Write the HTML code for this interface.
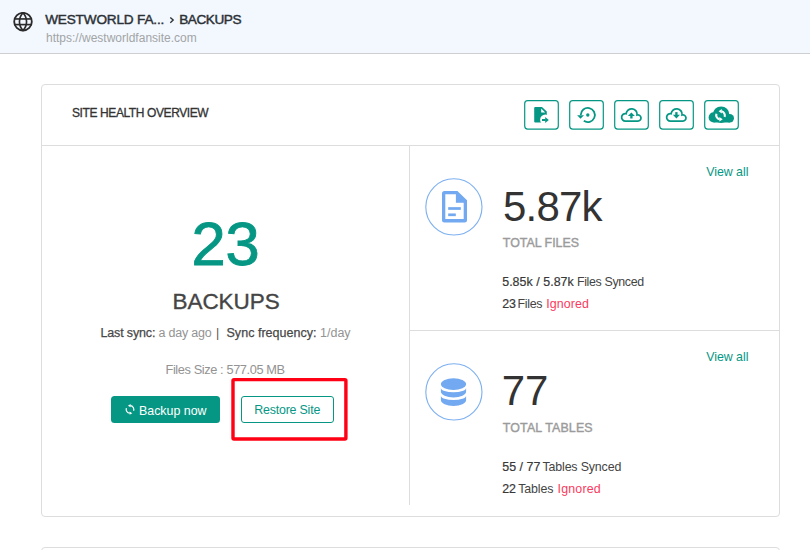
<!DOCTYPE html>
<html><head><meta charset="utf-8">
<style>
*{margin:0;padding:0;box-sizing:border-box}
html,body{width:810px;height:550px;overflow:hidden;background:#fff;font-family:"Liberation Sans",sans-serif;color:#333}
.a{position:absolute;white-space:nowrap;line-height:1}
#hdr{position:absolute;left:0;top:0;width:810px;height:54px;background:#f3f8fe;border-bottom:1px solid #cdcfd1}
.card{position:absolute;left:41px;top:84px;width:739px;height:433px;border:1px solid #dddddd;border-radius:4px}
.card2{position:absolute;left:41px;top:547px;width:739px;height:100px;border:1px solid #dddddd;border-radius:4px}
.sb{-webkit-text-stroke:0.45px currentColor}
</style></head><body>
<div id="hdr">
  <svg class="a" style="left:13px;top:12px" width="20" height="20" viewBox="0 0 20 20">
    <circle cx="10" cy="9.65" r="8.8" fill="none" stroke="#2b2b2b" stroke-width="1.85"/>
    <path d="M10,1 A12.3,12.3 0 0 0 10,18.3 A12.3,12.3 0 0 0 10,1 Z" fill="none" stroke="#2b2b2b" stroke-width="1.65"/>
    <line x1="1.2" y1="6.95" x2="18.8" y2="6.95" stroke="#2b2b2b" stroke-width="1.65"/>
    <line x1="1.2" y1="12.6" x2="18.8" y2="12.6" stroke="#2b2b2b" stroke-width="1.65"/>
  </svg>
  <div class="a sb" style="left:45.2px;top:13.1px;font-size:13.6px;letter-spacing:-0.18px;color:#2c3136">WESTWORLD FA...</div>
  <svg class="a" style="left:168px;top:16px" width="8" height="8" viewBox="168 16 8 8"><path d="M170.3,17.4 L173.2,20.1 L170.3,22.8" fill="none" stroke="#2c3136" stroke-width="1.35"/></svg>
  <div class="a sb" style="left:179.2px;top:13.1px;font-size:13.6px;letter-spacing:-0.45px;color:#2c3136">BACKUPS</div>
  <div class="a" style="left:46px;top:32px;font-size:12px;color:#a2a4a6">https://westworldfansite.com</div>
</div>

<div class="card"></div>
<div class="card2"></div>

<div class="a" style="left:42px;top:145px;width:737px;height:1px;background:#dddddd"></div>
<div class="a" style="left:409px;top:146px;width:1px;height:359px;background:#dddddd"></div>
<div class="a" style="left:410px;top:330px;width:369px;height:1px;background:#dddddd"></div>

<div class="a sb" style="left:72px;top:106.5px;font-size:12px;letter-spacing:-0.4px;-webkit-text-stroke:0.3px #333;color:#333">SITE HEALTH OVERVIEW</div>

<svg class="a" style="left:520px;top:96px" width="230" height="40" viewBox="520 96 230 40"><g fill="none" stroke="#069784" stroke-width="1.2"><rect x="524.7" y="100.7" width="33.6" height="28.4" rx="3"/><rect x="569.7" y="100.7" width="33.6" height="28.4" rx="3"/><rect x="614.7" y="100.7" width="33.6" height="28.4" rx="3"/><rect x="659.7" y="100.7" width="33.6" height="28.4" rx="3"/><rect x="704.7" y="100.7" width="33.6" height="28.4" rx="3"/></g></svg>

<div class="a" style="left:191.5px;top:213px;font-size:61.5px;letter-spacing:-0.3px;-webkit-text-stroke:0.9px #069784;color:#069784">23</div>
<div class="a" style="left:172.5px;top:290.5px;font-size:22.5px;letter-spacing:-0.05px;-webkit-text-stroke:0.35px #454545;color:#454545">BACKUPS</div>
<div class="a" style="left:100.5px;top:327.2px;font-size:12.5px;letter-spacing:-0.15px;-webkit-text-stroke:0.25px #484848;color:#484848">Last sync:</div>
<div class="a" style="left:158.5px;top:327.2px;font-size:12.5px;letter-spacing:-0.2px;color:#939393">a day ago</div>
<div class="a" style="left:216px;top:327.2px;font-size:12.5px;color:#555">|</div>
<div class="a" style="left:226.5px;top:327.2px;font-size:12.5px;letter-spacing:0.03px;-webkit-text-stroke:0.25px #484848;color:#484848">Sync frequency:</div>
<div class="a" style="left:320px;top:327.2px;font-size:12.5px;color:#939393">1/day</div>
<div class="a" style="left:165.5px;top:364.2px;font-size:12.8px;letter-spacing:-0.4px;color:#939393">Files Size : 577.05 MB</div>

<div class="a" style="left:111px;top:396px;width:109px;height:27px;background:#069784;border-radius:3.5px"></div>
<div class="a" style="left:139px;top:404.5px;font-size:12.4px;letter-spacing:0px;color:#fff">Backup now</div>
<div class="a" style="left:241px;top:396px;width:93px;height:27px;border:1px solid #069784;border-radius:3px"></div>
<div class="a" style="left:254.3px;top:404.3px;font-size:12.4px;letter-spacing:-0.2px;color:#069784">Restore Site</div>
<svg class="a" style="left:228px;top:375px" width="124" height="70" viewBox="228 375 124 70"><rect x="233" y="379.6" width="112.9" height="59.35" rx="1" fill="none" stroke="#ff0015" stroke-width="3.4"/></svg>

<svg class="a" style="left:420px;top:173px" width="68" height="68" viewBox="420 173 68 68"><circle cx="453.9" cy="206.9" r="28.1" fill="none" stroke="#7db0f0" stroke-width="1.1"/></svg>
<div class="a" style="left:503px;top:186px;font-size:42px;letter-spacing:-0.8px;color:#333">5.87k</div>
<div class="a" style="left:502.8px;top:237.2px;font-size:12.4px;letter-spacing:0px;-webkit-text-stroke:0.4px #9b9b9b;color:#9b9b9b">TOTAL FILES</div>
<div class="a" style="left:706.3px;top:166px;font-size:12.4px;letter-spacing:-0.05px;color:#069784">View all</div>

<div class="a" style="left:502.2px;top:276.2px;font-size:12.4px;letter-spacing:0.05px;-webkit-text-stroke:0.2px #383838;color:#383838">5.85k / 5.87k</div>
<div class="a" style="left:577px;top:276.2px;font-size:12.4px;letter-spacing:-0.35px;color:#444">Files Synced</div>
<div class="a" style="left:502.2px;top:298.3px;font-size:12.4px;letter-spacing:0px;-webkit-text-stroke:0.2px #383838;color:#383838">23</div>
<div class="a" style="left:517.5px;top:298.3px;font-size:12.4px;letter-spacing:-0.3px;color:#444">Files</div>
<div class="a" style="left:546.3px;top:298.3px;font-size:12.4px;letter-spacing:0.1px;color:#fa3a5e">Ignored</div>
<div class="a" style="left:502.2px;top:461.2px;font-size:12.4px;letter-spacing:0.05px;-webkit-text-stroke:0.2px #383838;color:#383838">55 / 77</div>
<div class="a" style="left:542.5px;top:461.2px;font-size:12.4px;letter-spacing:-0.15px;color:#444">Tables Synced</div>
<div class="a" style="left:502.2px;top:483.2px;font-size:12.4px;letter-spacing:0px;-webkit-text-stroke:0.2px #383838;color:#383838">22</div>
<div class="a" style="left:518.2px;top:483.2px;font-size:12.4px;letter-spacing:-0.1px;color:#444">Tables</div>
<div class="a" style="left:557.5px;top:483.2px;font-size:12.4px;letter-spacing:0.2px;color:#fa3a5e">Ignored</div>
<svg class="a" style="left:420px;top:358px" width="68" height="68" viewBox="420 358 68 68"><circle cx="453.9" cy="391.9" r="28.1" fill="none" stroke="#7db0f0" stroke-width="1.1"/></svg>
<div class="a" style="left:501.8px;top:370px;font-size:42px;letter-spacing:-0.2px;color:#333">77</div>
<div class="a" style="left:502.8px;top:422.2px;font-size:12.4px;letter-spacing:0.15px;-webkit-text-stroke:0.4px #9b9b9b;color:#9b9b9b">TOTAL TABLES</div>
<div class="a" style="left:706.3px;top:351px;font-size:12.4px;letter-spacing:-0.05px;color:#069784">View all</div>

<svg class="a" style="left:524px;top:100px" width="36" height="30" viewBox="0 0 36 30">
  <path d="M10.2,8 Q10.2,7 11.2,7 H18 L22.8,11.6 V21.6 Q22.8,22.6 21.8,22.6 H11.2 Q10.2,22.6 10.2,21.6 Z" fill="#069784"/>
  <path d="M17.2,8.4 V12.6 H21.2 Z" fill="#fff"/>
  <circle cx="21.3" cy="19.7" r="5.2" fill="#fff"/>
  <rect x="18" y="19" width="3.6" height="2" fill="#069784"/>
  <path d="M21.2,17 L24.8,20 L21.2,23 Z" fill="#069784"/>
</svg>
<svg class="a" style="left:569px;top:100px" width="36" height="30" viewBox="0 0 36 30">
  <path d="M11.75,15 A7.05,7.05 0 1 1 14.8,20.8" fill="none" stroke="#069784" stroke-width="1.8"/>
  <path d="M8.1,15.3 H15 L11.5,18.8 Z" fill="#069784"/>
  <circle cx="18.8" cy="15" r="1.7" fill="#069784"/>
</svg>
<svg class="a" style="left:614px;top:100px" width="36" height="30" viewBox="0 0 36 30">
  <path d="M11.4,21.05 H23.9 A3.1,3.1 0 1 0 23.07,14.96 A5.5,5.5 0 0 0 12.15,13.63 A3.75,3.75 0 1 0 11.4,21.05 Z" fill="none" stroke="#069784" stroke-width="1.75"/>
  <path d="M13.9,16 H20.9 L17.4,12.4 Z" fill="#069784"/>
  <rect x="16.25" y="15.6" width="2.3" height="2.9" fill="#069784"/>
</svg>
<svg class="a" style="left:659px;top:100px" width="36" height="30" viewBox="0 0 36 30">
  <path d="M11.4,21.05 H23.9 A3.1,3.1 0 1 0 23.07,14.96 A5.5,5.5 0 0 0 12.15,13.63 A3.75,3.75 0 1 0 11.4,21.05 Z" fill="none" stroke="#069784" stroke-width="1.75"/>
  <path d="M13.9,14.8 H20.9 L17.4,18.5 Z" fill="#069784"/>
  <rect x="16.25" y="12.1" width="2.3" height="3" fill="#069784"/>
</svg>
<svg class="a" style="left:704px;top:100px" width="36" height="30" viewBox="0 0 36 30">
  <g fill="#069784"><circle cx="17.1" cy="14.7" r="8.3"/><circle cx="9.7" cy="17.4" r="5.1"/><circle cx="25.8" cy="18.3" r="4.2"/><rect x="9.8" y="16" width="16" height="6.5"/></g>
  <g fill="none" stroke="#fff" stroke-width="2.1">
    <path d="M20.6,16.8 A4.2,4.2 0 0 0 17.6,11.3"/>
    <path d="M12.4,13.8 A4.2,4.2 0 0 0 15.6,19.2"/>
  </g>
  <path d="M17.8,8.9 V13.5 L14.6,11.2 Z" fill="#fff"/>
  <path d="M15.4,16.9 V21.5 L18.7,19.2 Z" fill="#fff"/>
</svg>
<svg class="a" style="left:124px;top:403px" width="12" height="13" viewBox="0 0 12 13">
  <g fill="none" stroke="#fff" stroke-width="1.25">
    <path d="M6.4,2.7 A3.8,3.8 0 0 1 9.6,7.8"/>
    <path d="M2.4,5.1 A3.8,3.8 0 0 0 5.8,10.2"/>
  </g>
  <path d="M6.6,1.1 V4.3 L3.9,2.7 Z" fill="#fff"/>
  <path d="M5.6,8.6 V11.8 L8.3,10.2 Z" fill="#fff"/>
</svg>
<svg class="a" style="left:425px;top:178px" width="58" height="58" viewBox="0 0 58 58">
  <path d="M17,15.4 Q17,12.9 19.5,12.9 H32.4 L42,22.3 V41.9 Q42,44.4 39.5,44.4 H19.5 Q17,44.4 17,41.9 Z M20.3,16.2 V41.1 H38.7 V24.7 H30.9 V16.2 Z" fill="#72a9f0" fill-rule="evenodd"/>
  <rect x="23.2" y="29.15" width="12.6" height="2.7" fill="#72a9f0"/>
  <rect x="23.2" y="35.45" width="7.6" height="2.7" fill="#72a9f0"/>
</svg>
<svg class="a" style="left:425px;top:363px" width="58" height="58" viewBox="0 0 58 58">
  <g fill="#72a9f0">
  <ellipse cx="28.5" cy="21.1" rx="12.6" ry="5.9"/>
  <path d="M15.9,25 A12.6,4.3 0 0 0 41.1,25 V28.6 A12.6,5.9 0 0 1 15.9,28.6 Z"/>
  <path d="M15.9,32.8 A12.6,4.3 0 0 0 41.1,32.8 V37.1 A12.6,5.9 0 0 1 15.9,37.1 Z"/>
  </g>
</svg>
</body></html>
